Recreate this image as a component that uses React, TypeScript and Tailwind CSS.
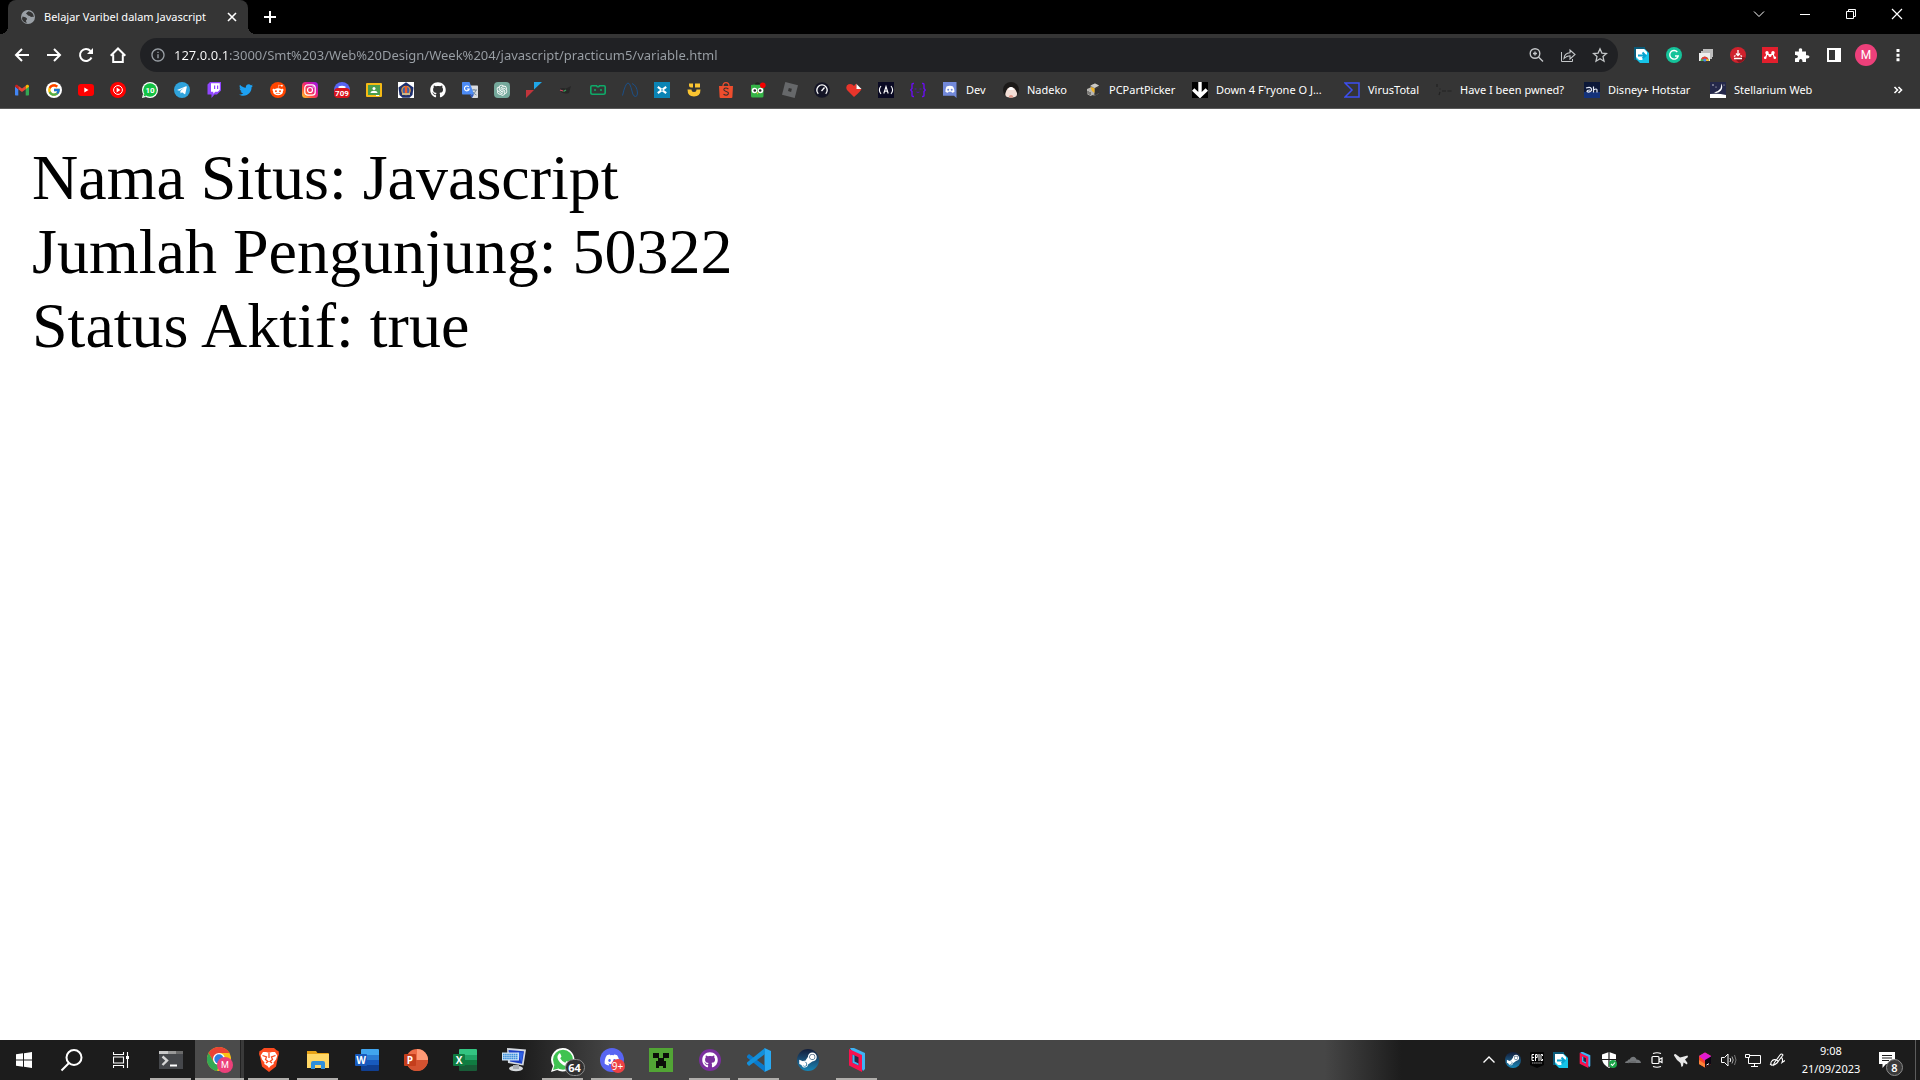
import React from "react";
import { FcGoogle } from "react-icons/fc";
import {
  FaDiscord,
  FaGithub,
  FaRedditAlien,
  FaSteamSymbol,
  FaTwitter,
} from "react-icons/fa";
import { AiOutlineOpenAI } from "react-icons/ai";
import { MdOutlineInfo } from "react-icons/md";

type SvgProps = { children: React.ReactNode; box?: number; className?: string };

function Svg({ children, box = 16, className = "size-4" }: SvgProps) {
  return (
    <svg viewBox={`0 0 ${box} ${box}`} className={`block shrink-0 ${className}`} fill="none" aria-hidden="true">
      {children}
    </svg>
  );
}

/* ---------- Bookmark icons ---------- */

const Gmail = () => (
  <Svg>
    <path d="M1 4.2V12.5c0 .6.4 1 1 1h2.3V7.2z" fill="#4285f4" />
    <path d="M15 4.2v8.3c0 .6-.4 1-1 1h-2.3V7.2z" fill="#34a853" />
    <path d="M4.300 7.200V3.700L8 6.500l3.700-2.800v3.500L8 10z" fill="#ea4335" />
    <path d="M11.700 3.700l.8-.6c1-.8 2.500-.1 2.500 1.200v.5l-3.300 2.500z" fill="#fbbc04" />
    <path d="M4.300 3.700l-.8-.6C2.500 2.300 1 3 1 4.300v.5l3.300 2.500z" fill="#c5221f" />
  </Svg>
);
const Google = () => (
  <span className="flex size-4 items-center justify-center rounded-full bg-white">
    <FcGoogle className="size-3.5" />
  </span>
);
const YouTube = () => (
  <Svg>
    <rect y="2" width="16" height="12" rx="3" fill="#f00" />
    <path d="M6.300 5.500v5l4.200-2.500z" fill="#fff" />
  </Svg>
);
const YouTubeMusic = () => (
  <Svg>
    <circle cx="8" cy="8" r="8" fill="#f00" />
    <circle cx="8" cy="8" r="4.400" stroke="#fff" />
    <path d="M6.600 5.600v4.800L10.400 8z" fill="#fff" />
  </Svg>
);
const WhatsAppCount = () => (
  <Svg>
    <circle cx="8" cy="8" r="8" fill="#fff" />
    <path d="M0 16l1-4 3 3z" fill="#fff" />
    <circle cx="8" cy="8" r="6.800" fill="#13c143" />
    <path d="M1.500 14.500l1-3 2 2z" fill="#13c143" />
    <text x="8" y="11" fontSize="8" fontWeight="700" fontFamily="Roboto, sans-serif" fill="#fff" textAnchor="middle">
      10
    </text>
  </Svg>
);
const Telegram = () => (
  <Svg>
    <circle cx="8" cy="8" r="8" fill="#2fa3dc" />
    <path d="M3 8l9-3.700c.5-.2.900.1.800.7l-1.500 6.700c-.1.500-.5.600-.9.400L8 10.300l-1.300 1.200-.4-2.400L10 5.800 5.300 8.800z" fill="#fff" />
  </Svg>
);
const Twitch = () => (
  <Svg>
    <path d="M1.500 2.500L4 0h11v8.500l-4 4H8.500L5.500 16v-3.500h-4z" fill="#9146ff" />
    <path d="M5 1.200h8.800v6.600l-2 2H9.300l-2 2v-2H5z" fill="#fff" />
    <path d="M8 3.500h1.200V7H8zM11 3.500h1.200V7H11z" fill="#9146ff" />
  </Svg>
);
const Twitter = () => <FaTwitter className="size-3.5 text-[#1da1f2]" />;
const Reddit = () => (
  <span className="flex size-4 items-center justify-center rounded-full bg-[#ff4500] text-white">
    <FaRedditAlien className="size-3" />
  </span>
);
const Instagram = () => (
  <Svg>
    <defs>
      <linearGradient id="insta" x1="0" y1="1" x2="1" y2="0">
        <stop offset="0" stopColor="#ffd32a" />
        <stop offset=".35" stopColor="#ff4b3e" />
        <stop offset=".65" stopColor="#e0169b" />
        <stop offset="1" stopColor="#8a1cf0" />
      </linearGradient>
    </defs>
    <rect width="16" height="16" rx="3.500" fill="url(#insta)" />
    <rect x="2.800" y="2.800" width="10.400" height="10.400" rx="3" stroke="#fff" strokeWidth="1.200" />
    <circle cx="8" cy="8" r="2.500" stroke="#fff" strokeWidth="1.200" />
    <circle cx="11.100" cy="4.900" r=".7" fill="#fff" />
  </Svg>
);
const DiscordCount = () => (
  <Svg>
    <circle cx="8" cy="8" r="8" fill="#5865f2" />
    <path d="M4.500 4.500q3.500-1.500 7 0v2h-7z" fill="#fff" />
    <rect y="6" width="16" height="10" rx="4" fill="#d8141c" />
    <text x="8" y="14" fontSize="8" fontWeight="700" fontFamily="Roboto, sans-serif" fill="#fff" textAnchor="middle">
      709
    </text>
  </Svg>
);
const Classroom = () => (
  <Svg>
    <rect y="1" width="16" height="14" rx="1" fill="#f5ba15" />
    <rect x="2" y="3" width="12" height="10" fill="#4a9c4d" />
    <circle cx="8" cy="6.500" r="1.500" fill="#fff" />
    <path d="M4.500 11c0-3 7-3 7 0z" fill="#fff" />
    <path d="M10 13h3v1h-3z" fill="#fff" />
  </Svg>
);
const Polytechnic = () => (
  <Svg>
    <path d="M0 0h16v16H0z" fill="#fff" />
    <path d="M8 .3L15.500 5.500 14.500 13l-3 2.700h-7L1.500 13 .5 5.500z" fill="#1d2f6f" />
    <circle cx="8" cy="8.500" r="4.800" fill="#d99a45" />
    <circle cx="8" cy="8.500" r="3.400" fill="#3a62b0" />
    <path d="M6.800 4h2.400v8H6.800z" fill="#f05a28" />
    <path d="M4 11h8v2H4z" fill="#c9b68a" />
  </Svg>
);
const GitHub = () => <FaGithub className="size-4 text-white" />;
const Translate = () => (
  <Svg>
    <path d="M7 3.500h8c.6 0 1 .4 1 1V15c0 .6-.4 1-1 1H10z" fill="#d9dbdf" />
    <path d="M9 8h6M12 7v1m2 0q-.5 3-4 5m1-3q1 2 3.500 3" stroke="#6b7f92" strokeWidth=".9" />
    <path d="M1 0h6.500L12 12.500H1c-.6 0-1-.4-1-1V1c0-.6.400-1 1-1z" fill="#4c8bf5" />
    <path d="M7.500 12.500H12L10 16z" fill="#3057b8" />
    <path d="M6.800 5A2.400 2.400 0 1 0 7.200 7H5" stroke="#fff" strokeWidth="1.100" />
  </Svg>
);
const ChatGpt = () => (
  <span className="flex size-4 items-center justify-center rounded-sm bg-[#75a99c] text-white">
    <AiOutlineOpenAI className="size-3.5" />
  </span>
);
const Triangles = () => (
  <Svg>
    <path d="M8 0h8L8 7.500z" fill="#1fa7e8" />
    <path d="M0 8h8l-8 8z" fill="#c1343b" />
  </Svg>
);
const DarkCat = () => (
  <Svg>
    <path d="M2 6.500q3-1 6 0l5-2.500-2 7q-4 1.500-8-1z" fill="#272727" />
    <path d="M2 8l3 1" stroke="#d94b68" strokeWidth="1.200" />
    <path d="M5.500 9.500l2.500-1.500" stroke="#3ba55c" strokeWidth="1.200" />
  </Svg>
);
const GreenRobot = () => (
  <Svg>
    <path d="M2 3.800h4.500l.8 1h1.400l.8-1H14q1.200 0 1.200 1.200v5.500q0 1.700-1.700 1.700h-11Q.8 12.200.8 10.500V5Q.8 3.800 2 3.800z" stroke="#0fa968" strokeWidth="1.600" />
    <path d="M4 7.200h2v1.600H4zM10 7.200h2v1.600h-2z" fill="#0fa968" />
  </Svg>
);
const Curve = () => (
  <Svg>
    <path d="M.5 13.500Q3.500 1 6 1q1.800 0 3 4.500l1.800 6.500q1 2.500 2.700 2.500 2 0 2-3.500-.5-7.500-5.500-9.500" stroke="#1c4f86" />
  </Svg>
);
const CrossTile = () => (
  <Svg>
    <path d="M0 0h16v16H0z" fill="#0b84b5" />
    <path d="M3.800 4.800l8.400 6.400M12.200 4.800l-8.400 6.400" stroke="#fff" strokeWidth="2.200" />
    <path d="M7 8h2" stroke="#0b84b5" />
  </Svg>
);
const Smile = () => (
  <Svg>
    <path d="M3 1.500h4v4H5q-2 0-2-2zM9 1.500h5v4H9zM1.500 7.500h4q0 2.500 2.500 2.500t2.500-2.500h4q0 7-6.500 7t-6.500-7z" fill="#fbc531" />
  </Svg>
);
const Shopee = () => (
  <Svg>
    <path d="M1 4h14l-.6 11q0 1-1 1H2.600q-1 0-1-1z" fill="#ee4d2d" />
    <path d="M5 4q0-3.300 3-3.300T11 4" stroke="#ee4d2d" strokeWidth="1.200" />
    <path d="M10.400 7Q8 5.200 6.300 6.500q-1.400 1.700 1.400 2.700 3.500 1 2.500 3Q8.500 14.200 5.500 12.300" stroke="#3b2f2d" strokeWidth="1.100" />
  </Svg>
);
const Owl = () => (
  <Svg>
    <path d="M5 3q2.500-4 5 0" stroke="#222" strokeWidth="1.400" />
    <path d="M1 3q3.500-1 6.500 0 3-1 6 0v11q0 1.500-1.500 1.500H2.500Q1 15.500 1 14z" fill="#35b447" />
    <circle cx="4.500" cy="8.500" r="2.800" fill="#fff" />
    <circle cx="10.500" cy="8.500" r="2.800" fill="#fff" />
    <circle cx="4.800" cy="8.500" r="1.300" fill="#222" />
    <circle cx="10.200" cy="8.500" r="1.300" fill="#222" />
    <path d="M6.500 10.500h2l-1 2z" fill="#f7b731" />
    <circle cx="12.800" cy="3.300" r="2.800" fill="#f50000" />
  </Svg>
);
const Roblox = () => (
  <Svg>
    <path d="M3.300 0L16 3.300 12.700 16 0 12.700z" fill="#66686a" />
    <path d="M6.800 6l3.100.8-.8 3.100L6 9.100z" fill="#353535" />
  </Svg>
);
const SpeedTest = () => (
  <Svg>
    <circle cx="8" cy="8" r="7.800" fill="#141526" />
    <path d="M4.300 11.800a5.200 5.200 0 1 1 7.400 0" stroke="#fff" strokeWidth="1.300" />
    <path d="M7.500 9L10.500 5.500" stroke="#fff" strokeWidth="1.300" />
  </Svg>
);
const Heart = () => (
  <Svg>
    <path d="M8 15L1 8Q-1 4 2.500 2.300 6 1.300 8 4q1-2 2.500-2.500V6l5 1Q15 9 8 15z" fill="#e9352b" />
    <path d="M10.500 2l5 5h-5z" fill="#fff" />
  </Svg>
);
const CodeCamp = () => (
  <Svg>
    <path d="M0 0h16v16H0z" fill="#0a0a23" />
    <path d="M3 4Q-.2 8 3 12M13 4q3.200 4 0 8M5.800 11.500L8 4.500l2.200 7M6.500 9.500q1.500-1 3 0" stroke="#fff" strokeWidth="1.100" />
  </Svg>
);
const Braces = () => (
  <Svg>
    <path d="M4 1.500H3q-1 0-1 1v4L.7 8 2 9.500v4q0 1 1 1h1M12 1.500h1q1 0 1 1v4L15.300 8 14 9.500v4q0 1-1 1h-1" stroke="#6a0df0" strokeWidth="1.400" />
    <path d="M4.500 7h2M9.500 7h2M6.500 10q1.500 1 3 0" stroke="#5312b8" strokeWidth="1" />
  </Svg>
);
const DiscordSquare = () => (
  <Svg>
    <path d="M1 0h13.500v16L12 13.800H1z" fill="#7289da" />
    <path d="M4.500 4.500Q8 3 11 4.500q1.700 2.500 1.500 5.300-1.200 1-2.500 1l-.5-1h-3l-.5 1q-1.300 0-2.600-1Q3.300 7 4.500 4.500z" fill="#fff" />
    <circle cx="6.200" cy="7.700" r="1" fill="#7289da" />
    <circle cx="9.700" cy="7.700" r="1" fill="#7289da" />
  </Svg>
);
const Nadeko = () => (
  <Svg>
    <circle cx="8" cy="8" r="8" fill="#1b1918" />
    <path d="M2.500 11Q4 5 8 5t6 6q.500 3-2 4-4 1.500-8 0-2.300-1-1.500-4z" fill="#f3ded6" />
    <path d="M6 6q2-2 4 0l1 2H5z" fill="#fff" />
    <path d="M6 14q2-2 4 0v1.500H6z" fill="#e0998a" />
  </Svg>
);
const Boxes = () => (
  <Svg>
    <path d="M5.500 3.500L10 1.500l4 2v8L9.500 14l-4-2z" fill="#8c8a86" />
    <path d="M9.500 6L14 3.500v8L9.500 14z" fill="#3f3d3b" />
    <path d="M5.500 3.500L10 1.500l4 2L9.500 6z" fill="#cbc9c4" />
    <path d="M2 7l3.500-1.500L9 7v5.500L5.500 14 2 12z" fill="#b9b7b2" />
    <path d="M5.500 5l4 1.300V11L7 9z" fill="#f0b323" />
    <path d="M3 9v3M5 10v3M11 7v5M13 6v5" stroke="#252525" strokeWidth=".8" />
  </Svg>
);
const DownArrow = () => (
  <Svg>
    <path d="M0 0h16v16H0z" fill="#000" />
    <path d="M8 0v14M1.200 7.500L8 14l6.800-6.500" stroke="#fff" strokeWidth="3.400" />
  </Svg>
);
const VirusTotal = () => (
  <Svg>
    <path d="M1 1h14v14H1l7-7z" stroke="#3d4ff2" strokeWidth="1.500" />
  </Svg>
);
const Pwned = () => (
  <Svg>
    <path d="M1 2v3M4 6.500v1M4 10l-1 3M6 9h4M11.500 9h4" stroke="#222" strokeWidth="1.200" />
  </Svg>
);
const Hotstar = () => (
  <Svg>
    <path d="M0 0h16v16H0z" fill="#0c1838" />
    <path d="M0 10h16v6H0z" fill="#14327a" />
    <path d="M2 6q6-2 5.500 2.500Q5 11 3 9.500 3 8 6 8M9.500 4.500v6M9.500 8q3.500-2 3.500 0v2.500" stroke="#e3e9f8" strokeWidth="1.200" />
  </Svg>
);
const Stellarium = () => (
  <Svg>
    <path d="M0 0h16v16H0z" fill="#24284a" />
    <path d="M0 12q8-1 16 1v3H0z" fill="#fff" />
    <path d="M11 1.500Q13.500 5 11 8.500 8 12 4 10.500 8.500 9.500 10.500 6.500 11.500 4 11 1.500z" fill="#fff" />
    <circle cx="3" cy="3" r=".7" fill="#fff" />
    <circle cx="6" cy="5" r=".5" fill="#fff" />
    <circle cx="14" cy="3" r=".5" fill="#fff" />
  </Svg>
);

const bookmarkIcons: [string, React.FC][] = [
  ["Gmail", Gmail],
  ["Google", Google],
  ["YouTube", YouTube],
  ["YouTube Music", YouTubeMusic],
  ["WhatsApp", WhatsAppCount],
  ["Telegram", Telegram],
  ["Twitch", Twitch],
  ["Twitter", Twitter],
  ["Reddit", Reddit],
  ["Instagram", Instagram],
  ["Discord", DiscordCount],
  ["Classroom", Classroom],
  ["Campus", Polytechnic],
  ["GitHub", GitHub],
  ["Translate", Translate],
  ["ChatGPT", ChatGpt],
  ["Courses", Triangles],
  ["Cat", DarkCat],
  ["Robot", GreenRobot],
  ["Curve", Curve],
  ["Cross", CrossTile],
  ["Smile", Smile],
  ["Shopee", Shopee],
  ["Tokopedia", Owl],
  ["Roblox", Roblox],
  ["Speedtest", SpeedTest],
  ["Heart", Heart],
  ["freeCodeCamp", CodeCamp],
  ["Braces", Braces],
];

const namedBookmarks: [string, React.FC, string][] = [
  ["Dev", DiscordSquare, "w-[61px]"],
  ["Nadeko", Nadeko, "w-[82px]"],
  ["PCPartPicker", Boxes, "w-[107px]"],
  ["Down 4 F'ryone O J...", DownArrow, "w-[152px]"],
  ["VirusTotal", VirusTotal, "w-[92px]"],
  ["Have I been pwned?", Pwned, "w-[148px]"],
  ["Disney+ Hotstar", Hotstar, "w-[126px]"],
  ["Stellarium Web", Stellarium, "w-[120px]"],
];

/* ---------- Browser chrome ---------- */

function TitleBar() {
  return (
    <header className="flex h-[34px] items-stretch bg-black pl-2 text-white">
      <div className="relative flex w-60 items-center rounded-t-lg bg-[#353535] pl-3 pr-2">
        <span className="absolute -left-2 bottom-0 size-2 bg-[radial-gradient(circle_at_0_0,#000_8px,#353535_8px)]" />
        <span className="absolute -right-2 bottom-0 size-2 bg-[radial-gradient(circle_at_100%_0,#000_8px,#353535_8px)]" />
        <Svg>
          <circle cx="8" cy="8" r="7" fill="#9aa0a6" />
          <path d="M2.500 7.500Q6 8 7 9.500q0 1.500-1 2 0 1.500 1 2.500-4-.5-5-4zM8.500 2.200q-2 1-2.500 2.500 1.500.5 2 1.800 2 0 3 1.500 2-.5 2.800 0Q13.500 3 8.500 2.200z" fill="#353535" />
        </Svg>
        <span className="ml-2 flex-1 whitespace-nowrap text-[11px] leading-4">Belajar Varibel dalam Javascript</span>
        <button aria-label="Close tab" className="flex size-4 items-center justify-center">
          <Svg>
            <path d="M4 4l8 8M12 4l-8 8" stroke="#fff" strokeWidth="1.600" />
          </Svg>
        </button>
      </div>
      <button aria-label="New tab" className="ml-3 flex w-5 items-center justify-center">
        <Svg>
          <path d="M8 2v12M2 8h12" stroke="#fff" strokeWidth="2" />
        </Svg>
      </button>
      <div className="ml-auto flex h-7 text-white">
        <button aria-label="Search tabs" className="flex w-[46px] items-center justify-center">
          <Svg>
            <path d="M3 5.500l5 5 5-5" stroke="#fff" />
          </Svg>
        </button>
        <button aria-label="Minimize" className="flex w-[46px] items-center justify-center">
          <Svg>
            <path d="M3 8.500h10" stroke="#fff" />
          </Svg>
        </button>
        <button aria-label="Restore" className="flex w-[46px] items-center justify-center">
          <Svg>
            <path d="M3.500 5.500h7v7h-7zM5.500 5V3.500h7v7H11" stroke="#fff" />
          </Svg>
        </button>
        <button aria-label="Close" className="flex w-[46px] items-center justify-center">
          <Svg>
            <path d="M3 3l10 10M13 3L3 13" stroke="#fff" strokeWidth="1.200" />
          </Svg>
        </button>
      </div>
    </header>
  );
}

function ToolButton({ label, children }: { label: string; children: React.ReactNode }) {
  return (
    <button aria-label={label} className="flex w-8 shrink-0 items-center justify-center">
      {children}
    </button>
  );
}

const DlArrow = () => (
  <Svg>
    <path d="M0 0h11v4H4v9H0z" fill="#0b5a78" />
    <path d="M2 2h9l4 4v10H6l-4-4z" fill="#16c4e8" />
    <path d="M2 2h8l3 3v2l-5 6H5l-3-3z" fill="#fff" />
    <path d="M4 8.500h7M8.500 5.500l3 3-3 3" stroke="#08a4d0" strokeWidth="2" />
  </Svg>
);

function Toolbar() {
  return (
    <div className="flex h-[42px] items-stretch bg-[#353535] pl-1.5 pr-1.5 pt-1 pb-1">
      <ToolButton label="Back">
        <Svg>
          <path d="M15 8H2M8 2L2 8l6 6" stroke="#fff" strokeWidth="2" />
        </Svg>
      </ToolButton>
      <ToolButton label="Forward">
        <Svg>
          <path d="M1 8h13M8 2l6 6-6 6" stroke="#fff" strokeWidth="2" />
        </Svg>
      </ToolButton>
      <ToolButton label="Reload">
        <Svg>
          <path d="M13.500 10.500A6 6 0 1 1 12.500 4" stroke="#fff" strokeWidth="2" />
          <path d="M15 1v6H9z" fill="#fff" />
        </Svg>
      </ToolButton>
      <ToolButton label="Home">
        <Svg>
          <path d="M3.200 7.500V15h9.600V7.500M.7 8.700L8 1.500l7.300 7.200" stroke="#fff" strokeWidth="2" />
        </Svg>
      </ToolButton>
      <div className="ml-1.5 flex flex-1 items-center rounded-full bg-[#202124] pl-2.5 pr-0.5">
        <MdOutlineInfo className="size-4 shrink-0 text-[#9aa0a6]" />
        <input
          aria-label="Address"
          readOnly
          value="127.0.0.1:3000/Smt%203/Web%20Design/Week%204/javascript/practicum5/variable.html"
          className="ml-2 min-w-0 flex-1 bg-[linear-gradient(to_right,#fff_55px,#9aa0a6_55px)] bg-clip-text text-[13px] leading-5 text-transparent outline-none"
        />
        <ToolButton label="Zoom">
          <Svg>
            <circle cx="7" cy="6.500" r="4.800" stroke="#c4c7c9" strokeWidth="1.400" />
            <path d="M10.500 10l4.500 4.500M7 4.500v4M5 6.500h4" stroke="#c4c7c9" strokeWidth="1.400" />
          </Svg>
        </ToolButton>
        <ToolButton label="Share">
          <Svg>
            <path d="M1.500 5v9.500h11V12" stroke="#c4c7c9" />
            <path d="M4 11.500Q4.500 6 10 5.800V3l5 4.500-5 4.500V8.800Q6.500 8.800 4 11.500z" stroke="#c4c7c9" strokeWidth="1.100" />
          </Svg>
        </ToolButton>
        <ToolButton label="Bookmark this page">
          <Svg>
            <path d="M8 1.800l1.900 4.300 4.600.4-3.500 3.100 1 4.600L8 11.800l-4 2.400 1-4.600L1.500 6.500l4.600-.4z" stroke="#c4c7c9" strokeWidth="1.300" />
          </Svg>
        </ToolButton>
      </div>
      <div className="ml-2 flex">
        <ToolButton label="Downloads helper">
          <DlArrow />
        </ToolButton>
        <ToolButton label="Grammarly">
          <Svg>
            <circle cx="8" cy="8" r="8" fill="#15c39a" />
            <path d="M11.300 5A4.300 4.300 0 1 0 12.200 9H9" stroke="#fff" strokeWidth="1.400" />
          </Svg>
        </ToolButton>
        <ToolButton label="Screen cast">
          <Svg>
            <path d="M5 2h10v8h-2V4H5zM3 4h11v8H3z" fill="#bdbdbd" />
            <path d="M1 6h11v8H1z" fill="#efefef" />
            <path d="M2.500 14a4 4 0 0 1 8.500 0z" fill="#4caf50" />
            <path d="M3 12.200a4 4 0 0 1 7.500 0z" fill="#e53935" />
            <path d="M7 12.200h3.500l.5 1.800H8z" fill="#fbc02d" />
            <circle cx="6.800" cy="13" r="1.500" fill="#4285f4" />
          </Svg>
        </ToolButton>
        <ToolButton label="Download manager">
          <Svg>
            <circle cx="8" cy="8" r="8" fill="#d0222d" />
            <path d="M12 10l3.500.5q-2 4.500-6.500 5.300l-4-4z" fill="#8d141c" />
            <path d="M8 3v4.500M6 6.500l2 2 2-2M4 9.500l1.500-1M12 9.500l-1.500-1M4 11.500h8" stroke="#fff" strokeWidth="1.300" />
          </Svg>
        </ToolButton>
        <ToolButton label="Mendeley">
          <Svg>
            <path d="M0 0h16v16H0z" fill="#e21f2d" />
            <circle cx="5" cy="5.800" r="1.700" fill="#fff" />
            <circle cx="11" cy="5.800" r="1.700" fill="#fff" />
            <circle cx="8" cy="8.600" r="1.500" fill="#fff" />
            <circle cx="3.200" cy="10.800" r="1.300" fill="#fff" />
            <circle cx="12.800" cy="10.800" r="1.300" fill="#fff" />
            <path d="M3.200 11q1.500-1.500 1.600-5L8 8.600 11.200 6q.1 3.500 1.600 5" stroke="#fff" strokeWidth="1.300" />
          </Svg>
        </ToolButton>
        <ToolButton label="Extensions">
          <Svg>
            <path d="M1 4.500h4q-.8-3.300 1.500-3.300T8 4.500h4v3.800q3.500-.6 3.500 1.500T12 11.500v3.500H8.500Q8.500 12 6.700 12T5 15H1v-3.700q3 .200 3-1.700T1 8z" fill="#fff" />
          </Svg>
        </ToolButton>
        <ToolButton label="Side panel">
          <Svg>
            <path d="M2 2h12v12H2z" stroke="#fff" strokeWidth="2" />
            <path d="M9 2h5v12H9z" fill="#fff" />
          </Svg>
        </ToolButton>
        <ToolButton label="Profile">
          <span className="flex size-[22px] items-center justify-center rounded-full bg-[#ec407a] font-[Roboto,sans-serif] text-xs text-white">
            M
          </span>
        </ToolButton>
        <ToolButton label="Menu">
          <Svg>
            <path d="M6.500 2h3v3h-3zM6.500 6.700h3v3h-3zM6.500 11.300h3v3h-3z" fill="#fff" />
          </Svg>
        </ToolButton>
      </div>
    </div>
  );
}

function BookmarksBar() {
  return (
    <nav className="flex h-[33px] items-center border-b border-[#5a5a5a] bg-[#353535] pl-1.5 pb-1 text-white">
      {bookmarkIcons.map(([name, Icon]) => (
        <a key={name} href="#" aria-label={name} className="flex w-8 shrink-0 justify-center">
          <Icon />
        </a>
      ))}
      <div className="ml-2 flex flex-1 items-center">
        {namedBookmarks.map(([name, Icon, width]) => (
          <a key={name} href="#" className={`flex shrink-0 items-center gap-2 whitespace-nowrap text-[11px] leading-4 ${width}`}>
            <Icon />
            {name}
          </a>
        ))}
      </div>
      <button aria-label="More bookmarks" className="mr-3.5">
        <Svg>
          <path d="M4.500 5l3 3-3 3M8.500 5l3 3-3 3" stroke="#fff" strokeWidth="1.600" />
        </Svg>
      </button>
    </nav>
  );
}

/* ---------- Taskbar ---------- */

const Office = ({ letter, dark, mid, light, tile }: { letter: string; dark: string; mid: string; light: string; tile: string }) => (
  <Svg box={24} className="size-6">
    <path d="M7 1h16q1 0 1 1v5H6V2q0-1 1-1z" fill={light} />
    <path d="M6 7h18v5H6z" fill={mid} />
    <path d="M6 12h18v5H6z" fill={tile} />
    <path d="M6 17h18v5q0 1-1 1H7q-1 0-1-1z" fill={dark} />
    <rect y="6" width="12" height="12" rx="1" fill={tile} />
    <text x="6" y="15.500" fontSize="10" fontWeight="700" fontFamily="Open Sans, sans-serif" fill="#fff" textAnchor="middle">
      {letter}
    </text>
  </Svg>
);

const Terminal = () => (
  <Svg box={24} className="size-6">
    <path d="M0 3h24v18H0z" fill="#45474b" />
    <path d="M0 3h9v3H0z" fill="#c8c8c8" />
    <path d="M9 3h8v3H9z" fill="#989898" />
    <path d="M17 3h7v3h-7z" fill="#6a6a6a" />
    <path d="M3.500 8.500l4.500 4-4.500 4.500" stroke="#d6d6d6" strokeWidth="2.400" />
    <path d="M11 17.500h7" stroke="#fff" strokeWidth="2" />
  </Svg>
);
const Chrome = () => (
  <Svg box={26} className="size-[26px]">
    <circle cx="12" cy="12" r="12" fill="#fbc116" />
    <path d="M1.600 6A12 12 0 0 1 22.400 6H12L6.800 15z" fill="#ea4335" />
    <path d="M1.600 6L6.800 15l5.200 3-2 6A12 12 0 0 1 1.600 6z" fill="#34a853" />
    <circle cx="12" cy="12" r="6" fill="#fff" />
    <circle cx="12" cy="12" r="4.700" fill="#2f7de1" />
    <circle cx="18" cy="18" r="8" fill="#ec407a" />
    <text x="18" y="21" fontSize="9" fontFamily="Roboto, sans-serif" fill="#fff" textAnchor="middle">
      M
    </text>
  </Svg>
);
const Brave = () => (
  <Svg box={24} className="size-6">
    <path d="M7 0h10l3 2.500 1.500.5.5 3-1 3-2 9.500L12 24l-7-5.500L3 9 2 6l.5-3L4 2.500z" fill="#fb4a1f" />
    <path d="M6 4h3l3 .7L15 4h3l2.300 3.500-1.300 4-2.500 3 .3 1.500-3.300 2-1.500 2-1.500-2-3.300-2 .3-1.500-2.500-3-1.300-4z" fill="#fff" />
    <path d="M5.500 7.500l4 1.500-1 2.500 2.500 2-2 1.500M18.500 7.500l-4 1.500 1 2.500-2.500 2 2 1.500M12 5v5" stroke="#fb4a1f" strokeWidth="1.300" />
  </Svg>
);
const Explorer = () => (
  <Svg box={24} className="size-6">
    <path d="M1 3h9l1.500 2H22q1 0 1 1v14H1z" fill="#e8a317" />
    <path d="M1 6h22v14H1z" fill="#ffd766" />
    <path d="M5 21v-6q0-2 2-2h10q2 0 2 2v6h-4v-4H9v4z" fill="#2f8fdb" />
  </Svg>
);
const Word = () => <Office letter="W" dark="#103f91" mid="#2b7cd3" light="#41a5ee" tile="#185abd" />;
const Excel = () => <Office letter="X" dark="#185c37" mid="#21a366" light="#33c481" tile="#107c41" />;
const PowerPoint = () => (
  <Svg box={24} className="size-6">
    <circle cx="13" cy="12" r="11" fill="#ed6c47" />
    <path d="M13 1a11 11 0 0 1 11 11H13z" fill="#ff9a76" />
    <path d="M2 12h22a11 11 0 0 1-22 0z" fill="#d35230" />
    <rect y="6" width="12" height="12" rx="1" fill="#c43e1c" />
    <text x="6" y="15.500" fontSize="10" fontWeight="700" fontFamily="Open Sans, sans-serif" fill="#fff" textAnchor="middle">
      P
    </text>
  </Svg>
);
const OnScreenKeyboard = () => (
  <Svg box={24} className="size-6">
    <ellipse cx="14" cy="20.500" rx="7" ry="2.800" fill="#d5d8dc" />
    <path d="M11 17h6v4h-6z" fill="#a9adb3" />
    <path d="M5 0l19 1.500-2.500 16L6 15z" fill="#d5d9e0" />
    <path d="M6.500 2l15.500 1.300-2 12.500L8 13.500z" fill="#1c3fc4" />
    <path d="M15 4l6 .5-1.500 10z" fill="#2f62e4" />
    <rect y="4.500" width="17" height="8" fill="#cfe4f8" />
    <path d="M1 6.500h15M1 8.500h15M1 10.500h15" stroke="#3f91dc" strokeWidth="1.500" strokeDasharray="1.600 .5" />
  </Svg>
);
const WhatsApp = () => (
  <span className="relative flex size-6">
    <Svg box={24} className="size-6">
      <path d="M12 0a11.700 11.700 0 1 1-5.800 22L0 24l2-6A11.700 11.700 0 0 1 12 0z" fill="#fff" />
      <circle cx="12" cy="11.700" r="10" fill="#3fc351" />
      <path d="M2 22l1.500-5.500 4 4z" fill="#3fc351" />
      <path d="M8 5.500q1-.5 1.500.5l1 2.500-1.300 1.700q1.800 3.300 5 4.600l1.500-1.800 3 1.500q.6 3-2.700 3.500-3 .4-7-3.500Q4.500 9.500 8 5.500z" fill="#fff" />
    </Svg>
    <span className="absolute -bottom-1 left-3.5 flex h-[17px] w-5 items-center justify-center rounded-full border border-[#8b8b8b] bg-[#303030] text-[11px] leading-none font-bold text-white">
      64
    </span>
  </span>
);
const Discord = () => (
  <span className="relative flex size-6 items-center justify-center rounded-full bg-[#5865f2] text-white">
    <FaDiscord className="size-4" />
    <span className="absolute -bottom-px left-[11px] flex size-3.5 items-center justify-center rounded-full bg-[#ed4245] text-[10px] leading-none">
      9+
    </span>
  </span>
);
const Minecraft = () => (
  <Svg box={24} className="size-6">
    <path d="M0 0h24v24H0z" fill="#52a535" />
    <path d="M4 5h6v5H4zM14 5h6v5h-6zM9 10h6v3h2v7h-3v-2h-4v2H7v-7h2z" fill="#0b0f08" />
  </Svg>
);
const GitHubDesktop = () => (
  <span className="flex size-[22px] items-center justify-center rounded-full bg-[#7b2f9e] text-white">
    <FaGithub className="size-4" />
  </span>
);
const VsCode = () => (
  <Svg box={24} className="size-6">
    <path d="M17.500 0L24 3v18l-6.500 3z" fill="#29a9f2" />
    <path d="M0 8l2-2 16 12v6L0 9.500z" fill="#0a7acc" />
    <path d="M0 16l2 2 16-12V0L0 14.500z" fill="#1390db" />
  </Svg>
);
const steamCircle = "flex items-center justify-center rounded-full bg-linear-to-b from-[#111d3a] to-[#1387b8] text-white";
const Steam = () => (
  <span className={`size-[22px] ${steamCircle}`}>
    <FaSteamSymbol className="size-5" />
  </span>
);
const Parsec = ({ small = false }: { small?: boolean }) => (
  <Svg box={24} className={small ? "size-4" : "size-6"}>
    <path d="M5 0h4l11 5v16l-2 2z" fill="#3db3f5" />
    <path d="M4 1l13 6v17L4 17.500z" fill="#f9114f" />
    <path d="M7.500 6.500l6 2.700v8.300l-6-2.700z" fill="#252b45" />
    <path d="M7.500 6.500l2 1v6l4 2v2l-6-2.700z" fill="#3db3f5" />
  </Svg>
);

type Task = { name: string; Icon: React.FC; state?: "open" | "active" };

const tasks: Task[] = [
  { name: "Terminal", Icon: Terminal, state: "open" },
  { name: "Google Chrome", Icon: Chrome, state: "active" },
  { name: "Brave", Icon: Brave, state: "open" },
  { name: "File Explorer", Icon: Explorer, state: "open" },
  { name: "Word", Icon: Word },
  { name: "PowerPoint", Icon: PowerPoint },
  { name: "Excel", Icon: Excel },
  { name: "On-Screen Keyboard", Icon: OnScreenKeyboard },
  { name: "WhatsApp", Icon: WhatsApp, state: "open" },
  { name: "Discord", Icon: Discord, state: "open" },
  { name: "Minecraft", Icon: Minecraft },
  { name: "GitHub Desktop", Icon: GitHubDesktop, state: "open" },
  { name: "Visual Studio Code", Icon: VsCode, state: "open" },
  { name: "Steam", Icon: Steam },
  { name: "Parsec", Icon: () => <Parsec />, state: "open" },
];

function TaskButton({ name, Icon, state }: Task) {
  return (
    <button
      aria-label={name}
      className={`relative flex w-[49px] shrink-0 items-center justify-center ${state === "active" ? "bg-[#4b4b4b]" : ""}`}
    >
      {state === "active" && <span className="absolute inset-y-0 right-0 w-1 border-l border-[#222] bg-[#3a3a3a]" />}
      <Icon />
      {state === "open" && <span className="absolute inset-x-1 bottom-0 h-0.5 bg-[#b0aeab]" />}
      {state === "active" && <span className="absolute inset-x-0 bottom-0 h-0.5 bg-[#b0aeab]" />}
    </button>
  );
}

const trayIcons: [string, React.ReactNode][] = [
  ["Show hidden icons", <Svg><path d="M2.500 10.500L8 5l5.500 5.500" stroke="#fff" strokeWidth="1.400" /></Svg>],
  ["Steam", <span className={`size-4 ${steamCircle}`}><FaSteamSymbol className="size-3.5" /></span>],
  [
    "Epic Games",
    <Svg>
      <path d="M1 1q0-1 1-1h12q1 0 1 1v12l-7 3-7-3z" fill="#050505" />
      <path d="M5 2.500H3v6h2M3 5.500h2M6.500 9V2.500h1.700v3H6.500M10 2v7M13.500 4V2.500H12v6h1.500V7" stroke="#fff" strokeWidth="1" />
      <path d="M3 11h10" stroke="#aaa" strokeWidth="1" strokeDasharray="1.500 .6" />
    </Svg>,
  ],
  ["Downloads", <DlArrow />],
  ["Parsec", <Parsec small />],
  [
    "Windows Security",
    <Svg>
      <path d="M8 0l7 2.500v5Q14 13 8 16 2 13 1 7.500v-5z" fill="#fff" />
      <path d="M8 0v15M1 7.500h14" stroke="#1c1c1c" strokeWidth="1.200" />
      <circle cx="12" cy="12" r="4" fill="#1ba548" />
      <path d="M10 12l1.500 1.500 2.500-3" stroke="#fff" strokeWidth="1.100" />
    </Svg>,
  ],
  [
    "Cloud",
    <Svg>
      <path d="M0 11q0-2 2.500-2 0-2 2-1.500Q6 4 9.500 5q2 1 2 2.500 4 0 4.500 3.500z" fill="#75787b" />
      <path d="M3 11q3-1.500 8-1" stroke="#555" strokeWidth=".7" />
    </Svg>,
  ],
  [
    "Meet Now",
    <Svg>
      <rect x="3" y="4.500" width="7" height="7" rx="1" stroke="#fff" strokeWidth="1.200" />
      <path d="M10 7.500l3-1.500v4.500l-3-1.500M4 1.500q4-1.500 8 0M4 14.500q4 1.500 8 0" stroke="#fff" strokeWidth="1.200" />
    </Svg>,
  ],
  [
    "Plane",
    <Svg>
      <path d="M1 2.500l1.500-.5L7 5.500 9 5l5.500-1.500L15 5l-3 2.500 2.500 3.500-.5 1.500-3.500-2L10 14l-1.500 1-1-4L4 8 1 3.500z" fill="#e7e7e7" />
    </Svg>,
  ],
  [
    "JetBrains Toolbox",
    <Svg>
      <path d="M2 4l6-3.500L14 4v8l-6 3.500L2 12z" fill="#f7452b" />
      <path d="M8 .5L14 4v3L8 9 2 4z" fill="#e01bd0" />
      <path d="M8 8l6-3.500V12l-6 3.500z" fill="#0c0713" />
      <path d="M2 8l6 4v3.500L2 12z" fill="#fd8438" />
      <path d="M9.500 13l2.500-1.300" stroke="#fff" />
    </Svg>,
  ],
  [
    "Volume",
    <Svg>
      <path d="M.5 5.500h3L7 2v12l-3.500-3.500h-3zM9 6q1.500 2 0 4" stroke="#fff" />
      <path d="M11 4.500q2.500 3.500 0 7" stroke="#aaa" />
      <path d="M13.500 3q3 5 0 10" stroke="#777" />
    </Svg>,
  ],
  [
    "Network",
    <Svg>
      <path d="M5 3.500h10.500v8H3.500V6M9.500 12v2.500M6 14.500h7" stroke="#fff" />
      <path d="M.5 2.500h4v3h-4z" stroke="#fff" fill="#1c1c1c" />
    </Svg>,
  ],
  [
    "Pen",
    <Svg>
      <path d="M1 12q3 2.500 7-1l6-8q-1.500-2-3 0L5.500 10.500 4 14M9 9Q5 6 2.500 9.500 1 12 3 13.500M12 5q2.500 2 1 5.500l3-2" stroke="#fff" strokeWidth="1.100" />
    </Svg>,
  ],
];

function Taskbar() {
  return (
    <footer className="flex h-10 shrink-0 items-stretch bg-[linear-gradient(to_right,#1c1c1c_27%,#464646_32%,#464646_69%,#1c1c1c_73%)] text-white">
      <button aria-label="Start" className="flex w-12 items-center justify-center">
        <Svg>
          <path d="M0 2.300L7 1.300v6.300H0zM8 1.200L16 0v7.600H8zM0 8.500h7v6.300l-7-1zM8 8.500h8V16l-8-1.200z" fill="#fff" />
        </Svg>
      </button>
      <button aria-label="Search" className="flex w-12 items-center justify-center">
        <Svg box={24} className="size-6">
          <circle cx="14" cy="9.500" r="7.500" stroke="#fff" strokeWidth="2" />
          <path d="M9 15l-7.500 7.500" stroke="#fff" strokeWidth="2" />
        </Svg>
      </button>
      <button aria-label="Task view" className="flex w-[50px] items-center justify-center">
        <Svg>
          <path d="M.5 0v2.500h10V0M.5 16v-2.500h10V16M.5 5h10v6H.5zM14.500 0v16" stroke="#fff" strokeWidth="1.100" />
          <path d="M13 4h3v3h-3z" fill="#fff" />
        </Svg>
      </button>
      <div className="flex">
        {tasks.map((task) => (
          <TaskButton key={task.name} {...task} />
        ))}
      </div>
      <div className="ml-auto flex">
        {trayIcons.map(([name, icon]) => (
          <button key={name} aria-label={name} className="flex w-6 items-center justify-center">
            {icon}
          </button>
        ))}
        <button className="flex w-[84px] flex-col items-center justify-center text-center text-[11px] leading-[18px]">
          <time>9:08</time>
          <time>21/09/2023</time>
        </button>
        <button aria-label="Notifications" className="relative mr-2 ml-0.5 flex w-8 items-center pl-1">
          <Svg>
            <path d="M0 0h16v12H7l-3.500 4v-4H0z" fill="#fff" />
            <path d="M3 3.500h10M3 6h10M3 8.500h7" stroke="#1c1c1c" />
          </Svg>
          <span className="absolute right-1 bottom-1 flex size-[17px] items-center justify-center rounded-full border border-[#8b8b8b] bg-[#3a3a3a] text-[11px] leading-none font-semibold">
            8
          </span>
        </button>
        <button aria-label="Show desktop" className="w-[5px] border-l border-[#5c5c5c]" />
      </div>
    </footer>
  );
}

export default function App() {
  return (
    <div className="flex min-h-screen flex-col bg-white font-['Noto_Sans',sans-serif]">
      <TitleBar />
      <Toolbar />
      <BookmarksBar />
      <main className="flex-1 p-8 font-['Liberation_Serif',serif] text-[64px] leading-[74px] text-black">
        <p>Nama Situs: Javascript</p>
        <p>Jumlah Pengunjung: 50322</p>
        <p>Status Aktif: true</p>
      </main>
      <Taskbar />
    </div>
  );
}
